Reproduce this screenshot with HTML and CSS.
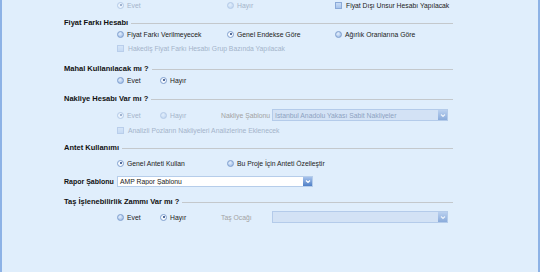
FILE: index.html
```html
<!DOCTYPE html>
<html>
<head>
    <meta name="viewport" content="width=device-width, initial-scale=1">
    <link rel="stylesheet" href="styles.css">
</head>
<body>
    <div class="panel">
        <div class="row opts">
            <label class="opt col1 off"><span class="radio on"></span>Evet</label>
            <label class="opt col2 off"><span class="radio"></span>Hayır</label>
            <label class="opt"><span class="check"></span>Fiyat Dışı Unsur Hesabı Yapılacak</label>
        </div>

        <div class="row head g7"><span class="title">Fiyat Farkı Hesabı</span><span class="line"></span></div>
        <div class="row opts g2">
            <label class="opt col1"><span class="radio"></span>Fiyat Farkı Verilmeyecek</label>
            <label class="opt col2"><span class="radio on"></span>Genel Endekse Göre</label>
            <label class="opt"><span class="radio"></span>Ağırlık Oranlarına Göre</label>
        </div>
        <div class="row opts g4">
            <label class="opt off"><span class="check"></span>Hakediş Fiyat Farkı Hesabı Grup Bazında Yapılacak</label>
        </div>

        <div class="row head g10"><span class="title">Mahal Kullanılacak mı ?</span><span class="line"></span></div>
        <div class="row opts g2">
            <label class="opt short1"><span class="radio"></span>Evet</label>
            <label class="opt"><span class="radio on"></span>Hayır</label>
        </div>

        <div class="row head g8"><span class="title">Nakliye Hesabı Var mı ?</span><span class="line"></span></div>
        <div class="row opts g7">
            <label class="opt short1 off"><span class="radio on"></span>Evet</label>
            <label class="opt short2 off"><span class="radio"></span>Hayır</label>
            <span class="field-label">Nakliye Şablonu</span>
            <div class="combo wide off">
                <span class="combo-text">İstanbul Anadolu Yakası Sabit Nakliyeler</span>
                <span class="combo-btn"><svg width="6" height="5" viewBox="0 0 6 5"><path d="M1 1.5 L3 3.5 L5 1.5" fill="none" stroke="#fff" stroke-width="1.2"/></svg></span>
            </div>
        </div>
        <div class="row opts g5">
            <label class="opt off"><span class="check"></span>Analizli Pozların Nakliyeleri Analizlerine Eklenecek</label>
        </div>

        <div class="row head g7"><span class="title">Antet Kullanımı</span><span class="line"></span></div>
        <div class="row opts g6">
            <label class="opt col1"><span class="radio on"></span>Genel Anteti Kullan</label>
            <label class="opt"><span class="radio"></span>Bu Proje İçin Anteti Özelleştir</label>
        </div>

        <div class="row g8">
            <span class="title field-title">Rapor Şablonu</span>
            <div class="combo">
                <span class="combo-text">AMP Rapor Şablonu</span>
                <span class="combo-btn"><svg width="6" height="5" viewBox="0 0 6 5"><path d="M1 1.5 L3 3.5 L5 1.5" fill="none" stroke="#fff" stroke-width="1.2"/></svg></span>
            </div>
        </div>

        <div class="row head g10"><span class="title">Taş İşlenebilirlik Zammı Var mı ?</span><span class="line"></span></div>
        <div class="row opts g6">
            <label class="opt short1"><span class="radio"></span>Evet</label>
            <label class="opt short2"><span class="radio on"></span>Hayır</label>
            <span class="field-label">Taş Ocağı</span>
            <div class="combo wide off">
                <span class="combo-text"></span>
                <span class="combo-btn"><svg width="6" height="5" viewBox="0 0 6 5"><path d="M1 1.5 L3 3.5 L5 1.5" fill="none" stroke="#fff" stroke-width="1.2"/></svg></span>
            </div>
        </div>
    </div>
</body>
</html>
```

FILE: styles.css
```css
html, body {
    margin: 0;
    height: 100%;
}

body {
    box-sizing: border-box;
    height: 272px;
    background-color: #e0eefc;
    border-left: 2px solid #8db2e6;
    border-right: 2px solid #8db2e6;
    font-family: "Liberation Sans", Arial, sans-serif;
    font-size: 6.8px;
    color: #222;
}

.panel {
    width: 389px;
    padding-left: 62px;
}

.row {
    display: flex;
    align-items: center;
    height: 10px;
}

.g2 { margin-top: 2px; }
.g4 { margin-top: 4px; }
.g5 { margin-top: 5px; }
.g6 { margin-top: 6px; }
.g7 { margin-top: 7px; }
.g8 { margin-top: 8px; }
.g10 { margin-top: 10px; }

.title {
    font-weight: bold;
    font-size: 7.5px;
    color: #111;
    white-space: nowrap;
}

.line {
    flex-grow: 1;
    height: 1px;
    margin-left: 3px;
    margin-top: 2px;
    background-color: #c4c8cc;
}

.opts {
    padding-left: 53px;
}

.opt {
    display: flex;
    align-items: center;
    white-space: nowrap;
}

.col1 { width: 110px; }
.col2 { width: 108px; }
.short1 { width: 43px; }
.short2 { width: 61px; }

.off {
    color: #a4b4ca;
}

.radio {
    box-sizing: border-box;
    flex-shrink: 0;
    width: 7px;
    height: 7px;
    margin-right: 3px;
    border-radius: 50%;
    border: 1px solid #7f9fcf;
    background: radial-gradient(circle at 40% 35%, #e6f0fc 0, #a9c4ea 70%);
    position: relative;
}

.radio.on {
    background: #f4f8fd;
}

.radio.on::after {
    content: "";
    position: absolute;
    left: 1.5px;
    top: 1.5px;
    width: 2px;
    height: 2px;
    border-radius: 50%;
    background-color: #1f3f7a;
}

.off .radio {
    opacity: 0.45;
}

.check {
    box-sizing: border-box;
    flex-shrink: 0;
    width: 7px;
    height: 7px;
    margin-right: 4px;
    border: 1px solid #8aa9d8;
    background: linear-gradient(#c9dcf5, #a8c4ec);
}

.off .check {
    opacity: 0.45;
}

.field-label {
    flex-shrink: 0;
    width: 51px;
    color: #a3a3a3;
    white-space: nowrap;
}

.field-title {
    flex-shrink: 0;
    width: 53px;
    font-size: 7px;
}

.combo {
    box-sizing: border-box;
    display: flex;
    align-items: center;
    flex-shrink: 0;
    width: 196px;
    height: 11px;
    border: 1px solid #b6cdea;
    background-color: #fff;
}

.combo.wide {
    width: 176px;
    height: 12px;
}

.combo.off {
    background-color: #d3e2f5;
    border-color: #b4cbea;
    color: #8ea3c2;
}

.combo-text {
    flex-grow: 1;
    padding-left: 2px;
    white-space: nowrap;
    overflow: hidden;
}

.combo-btn {
    display: flex;
    align-items: center;
    justify-content: center;
    width: 9px;
    height: 100%;
    background: linear-gradient(#a7c3ec, #4f7fc6);
}

.combo.off .combo-btn {
    opacity: 0.55;
}
```
